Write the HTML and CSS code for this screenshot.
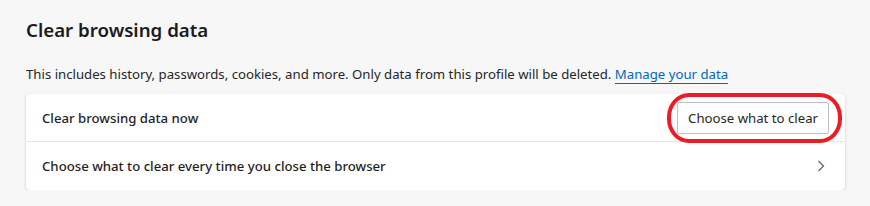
FILE: index.html
```html
<!DOCTYPE html>
<html lang="en">
<head>
  <meta charset="UTF-8">
  <meta name="viewport" content="width=device-width, initial-scale=1.0">
  <title>Clear browsing data</title>
  <link rel="stylesheet" href="styles.css">
</head>
<body>
  <div class="section">
    <h2 class="title">Clear browsing data</h2>
    <p class="desc">This includes history, passwords, cookies, and more. Only data from this profile will be deleted. <a href="#" class="link">Manage your data</a></p>
    <div class="card">
      <div class="row first">
        <span class="label">Clear browsing data now</span>
        <button class="btn">Choose what to clear</button>
        <div class="mark"></div>
      </div>
      <div class="row">
        <span class="label">Choose what to clear every time you close the browser</span>
        <svg class="chev" width="8" height="12" viewBox="0 0 8 12">
          <path d="M1.5 1 L6.5 6 L1.5 11" fill="none" stroke="#5f5f5f" stroke-width="1.2"/>
        </svg>
      </div>
    </div>
  </div>
</body>
</html>
```

FILE: styles.css
```css
* {
  margin: 0;
  padding: 0;
  box-sizing: border-box;
}

body {
  background-color: #f7f7f7;
  font-family: "Segoe UI", "Noto Sans", "Open Sans", sans-serif;
  color: #1f1f1f;
}

.section {
  padding: 16px 25px 0 26px;
}

.title {
  font-size: 18.7px;
  font-weight: 600;
  line-height: 28px;
  color: #1b1b1b;
}

.desc {
  margin-top: 20px;
  font-size: 13.2px;
  line-height: 20px;
  color: #262626;
}

.link {
  color: #0067b8;
  text-decoration: none;
  border-bottom: 1px solid #0067b8;
}

.card {
  margin-top: 10px;
  background-color: #fff;
  border-radius: 4px;
  box-shadow: 0 1px 3px rgba(0, 0, 0, 0.18);
}

.row {
  position: relative;
  display: flex;
  align-items: center;
  justify-content: space-between;
  height: 48px;
  padding: 0 16px;
  font-size: 13.2px;
}

.row.first {
  border-bottom: 1px solid #e5e5e5;
}

.label {
  color: #1f1f1f;
  font-weight: 500;
}

.btn {
  height: 32px;
  padding: 0 10px;
  font-family: inherit;
  font-size: 13.2px;
  color: #262626;
  background-color: #fff;
  border: 1px solid #c0c0c0;
  border-radius: 2px;
}

.chev {
  margin-right: 4px;
}

.mark {
  position: absolute;
  top: -1px;
  right: 3px;
  width: 175px;
  height: 50px;
  border: 4px solid #ed1c24;
  border-radius: 22px / 24px;
}
```
